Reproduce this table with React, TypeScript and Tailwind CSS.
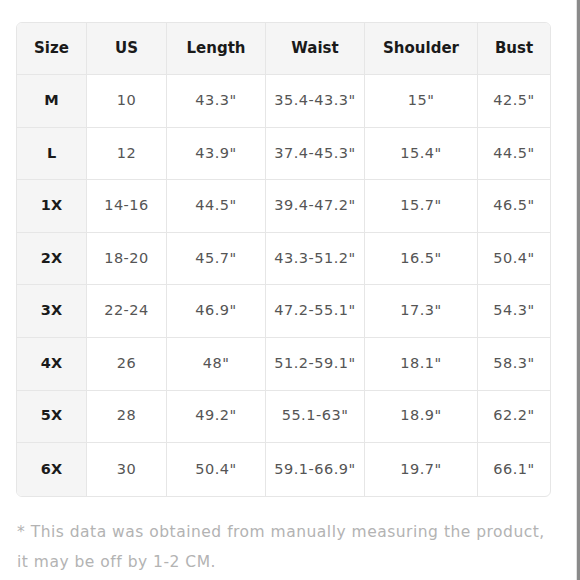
const headers = ["Size", "US", "Length", "Waist", "Shoulder", "Bust"];

const rows: string[][] = [
  ["M", "10", "43.3\"", "35.4-43.3\"", "15\"", "42.5\""],
  ["L", "12", "43.9\"", "37.4-45.3\"", "15.4\"", "44.5\""],
  ["1X", "14-16", "44.5\"", "39.4-47.2\"", "15.7\"", "46.5\""],
  ["2X", "18-20", "45.7\"", "43.3-51.2\"", "16.5\"", "50.4\""],
  ["3X", "22-24", "46.9\"", "47.2-55.1\"", "17.3\"", "54.3\""],
  ["4X", "26", "48\"", "51.2-59.1\"", "18.1\"", "58.3\""],
  ["5X", "28", "49.2\"", "55.1-63\"", "18.9\"", "62.2\""],
  ["6X", "30", "50.4\"", "59.1-66.9\"", "19.7\"", "66.1\""],
];

export default function App() {
  return (
    <div className="flex h-[580px] w-[580px] bg-white font-['DejaVu_Sans',sans-serif]">
      <div className="flex-1 pl-4 pt-[22px]">
        {/* Size chart */}
        <div className="w-[535px] overflow-hidden rounded-md border border-[#e6e6e6]">
          <div className="grid grid-cols-[70px_80px_99px_99px_113px_1fr]">
            {headers.map((h, i) => (
              <div
                key={h}
                className={`flex h-[52px] items-center justify-center border-b border-[#e6e6e6] bg-[#f5f5f5] text-[15px] font-bold text-[#1a1a1a] ${i < headers.length - 1 ? "border-r" : ""}`}
              >
                {h}
              </div>
            ))}
            {rows.map((row, r) =>
              row.map((cell, c) => (
                <div
                  key={`${r}-${c}`}
                  className={`flex h-[52.6px] items-center justify-center border-[#e6e6e6] ${r < rows.length - 1 ? "border-b" : ""} ${c < row.length - 1 ? "border-r" : ""} ${c === 0 ? "bg-[#f5f5f5] text-[14.5px] font-bold text-[#1a1a1a]" : "text-[14.5px] tracking-[0.5px] text-[#555]"}`}
                >
                  {cell}
                </div>
              ))
            )}
          </div>
        </div>

        {/* Footnote */}
        <p className="mt-[20px] pl-[1px] text-[15.5px] leading-[30px] tracking-[0.5px] text-[#b3b3b3]">
          * This data was obtained from manually measuring the product,
          <br />
          it may be off by 1-2 CM.
        </p>
      </div>

      {/* Scrollbar edge */}
      <div className="flex h-full">
        <div className="w-px bg-[#e2e2e2]" />
        <div className="w-[3px] bg-[#8a8a8a]" />
      </div>
    </div>
  );
}
